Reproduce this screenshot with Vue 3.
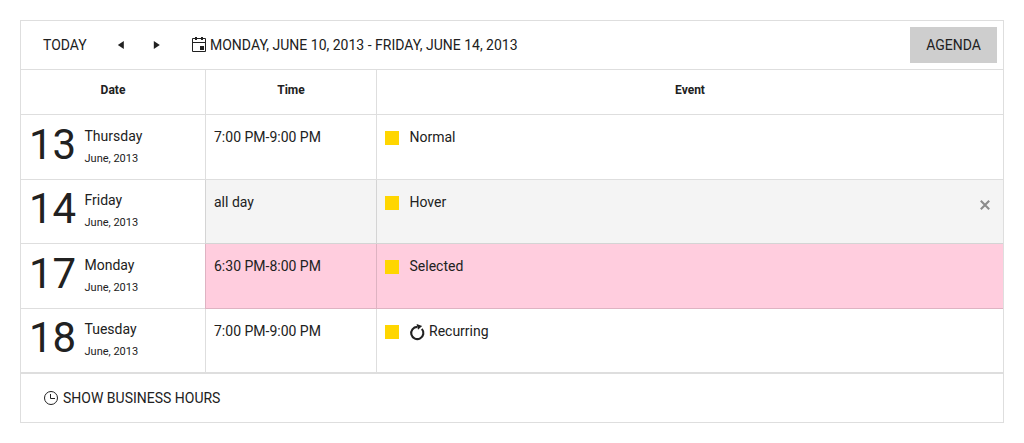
<script setup>
const rows = [
  { day: '13', weekday: 'Thursday', time: '7:00 PM-9:00 PM', title: 'Normal', state: '' },
  { day: '14', weekday: 'Friday', time: 'all day', title: 'Hover', state: 'hover' },
  { day: '17', weekday: 'Monday', time: '6:30 PM-8:00 PM', title: 'Selected', state: 'selected' },
  { day: '18', weekday: 'Tuesday', time: '7:00 PM-9:00 PM', title: 'Recurring', state: '', recurring: true },
]
</script>

<template>
  <div class="scheduler">
    <header class="toolbar">
      <span class="today">TODAY</span>
      <svg class="arrow prev" width="6" height="8" viewBox="0 0 6 8"><path d="M5.8 0v8L-.2 4z" /></svg>
      <svg class="arrow next" width="6" height="8" viewBox="0 0 6 8"><path d="M-.2 0v8l6-4z" /></svg>
      <svg class="calendar" width="14" height="15" viewBox="0 0 14 15">
        <path d="M.5 1.5h13v13H.5zM0 5.5h14" fill="none" stroke="#212121" />
        <path d="M3 0h2v3H3zM9 0h2v3H9zM8 9h4v4H8z" fill="#212121" />
      </svg>
      <span class="range">MONDAY, JUNE 10, 2013 - FRIDAY, JUNE 14, 2013</span>
      <button class="view">AGENDA</button>
    </header>
    <div class="row head">
      <div>Date</div>
      <div>Time</div>
      <div>Event</div>
    </div>
    <div v-for="row in rows" :key="row.day" class="row item" :class="row.state">
      <div class="date">
        <span class="day">{{ row.day }}</span>
        <div class="names">
          <div class="weekday">{{ row.weekday }}</div>
          <div class="month">June, 2013</div>
        </div>
      </div>
      <div class="cell time">{{ row.time }}</div>
      <div class="cell event">
        <span class="mark"></span>
        <svg v-if="row.recurring" class="recur" width="16" height="16" viewBox="0 0 16 16">
          <path d="M11.8 4.9A6.1 6.1 0 1 1 7.2 2.9" fill="none" stroke="#212121" stroke-width="2.1" />
          <path d="M6.6 0l5.6 2-4.2 3.8z" fill="#212121" />
        </svg>
        <span>{{ row.title }}</span>
        <svg v-if="row.state === 'hover'" class="close" width="10" height="10" viewBox="0 0 10 10">
          <path d="M.8 .8l8.4 8.4M9.2 .8L.8 9.2" stroke="#8c8c8c" stroke-width="2.1" />
        </svg>
      </div>
    </div>
    <footer class="footer">
      <svg width="14" height="14" viewBox="0 0 14 14">
        <circle cx="7" cy="7" r="6.5" fill="none" stroke="#212121" />
        <path d="M6.5 3v4.5H11" fill="none" stroke="#212121" />
      </svg>
      <span>SHOW BUSINESS HOURS</span>
    </footer>
  </div>
</template>

<style>
body { background: #fff; }
</style>

<style scoped>
.scheduler {
  box-sizing: border-box;
  width: 984px;
  height: 403px;
  margin: 20px;
  border: 1px solid #dedede;
  color: #212121;
  font: 14px/20px Roboto, sans-serif;
}
.scheduler * { box-sizing: border-box; }
svg { flex: none; display: block; overflow: visible; }
.toolbar {
  display: flex;
  align-items: center;
  height: 49px;
  padding: 0 6px 0 22px;
  border-bottom: 1px solid #dedede;
}
.today { width: 75px; }
.arrow { fill: #212121; }
.next { margin-left: 30px; }
.calendar { margin: 0 4px 1px 32px; }
.view {
  width: 87px;
  height: 36px;
  margin-left: auto;
  padding: 0;
  border: 0;
  background: #cecece;
  color: inherit;
  font: inherit;
}
.row {
  display: grid;
  grid-template-columns: 184px 171px 1fr;
  height: 65px;
}
.row > div { border-bottom: 1px solid rgba(33, 33, 33, .15); }
.row > div + div { border-left: 1px solid rgba(33, 33, 33, .15); }
.head {
  height: 45px;
  font-size: 12px;
  font-weight: 700;
  line-height: 40px;
  text-align: center;
}
.item:nth-child(even) { height: 64px; }
.date { display: flex; padding: 5px 0 0 8px; }
.item:nth-child(even) .date { padding-top: 4px; }
.day { width: 55.5px; font-size: 42px; line-height: 49px; }
.names { padding-top: 6px; }
.month { margin-top: 4px; font-size: 11px; line-height: 18px; }
.cell { padding: 12px 8px 0; }
.event { display: flex; align-items: flex-start; }
.mark { width: 14px; height: 14px; margin: 4px 10.5px 0 0; background: #ffd600; }
.recur { margin: 3px 3.5px 0 0; }
.close { margin: 8px 5px 0 auto; }
.hover .cell { background: #f4f4f4; }
.selected .cell { background: #ffcdde; }
.footer {
  display: flex;
  align-items: center;
  gap: 5px;
  height: 49px;
  padding-left: 23px;
  border-top: 1px solid #dedede;
}
</style>
